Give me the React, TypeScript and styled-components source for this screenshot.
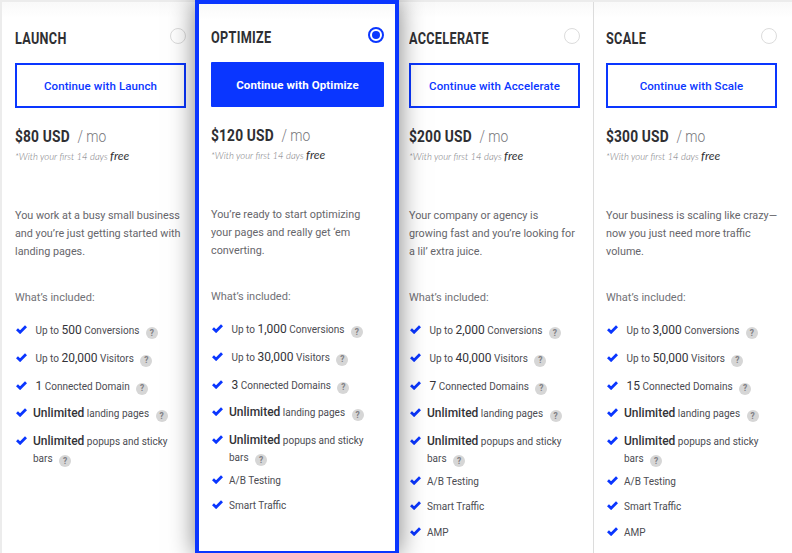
import React from "react";
import styled, { createGlobalStyle } from "styled-components";

const GlobalStyle = createGlobalStyle`
  html, body {
    margin: 0;
    padding: 0;
    height: 553px;
    overflow: hidden;
    background: #fff;
  }
  * { box-sizing: border-box; }
`;

const BLUE = "#0a36ff";

const Page = styled.div`
  display: flex;
  align-items: stretch;
  width: 792px;
  height: 553px;
  padding: 2px 0 0 2px;
  background: #ececec;
  overflow: hidden;
  font-family: "Roboto", "Liberation Sans", sans-serif;
`;

const Card = styled.section<{ $featured?: boolean; $left: number; $right: number; $w: number; $divider?: boolean }>`
  flex: 0 0 ${(p) => p.$w}px;
  min-width: 0;
  height: ${(p) => (p.$featured ? "555px" : "553px")};
  margin-top: ${(p) => (p.$featured ? "-2px" : "0")};
  padding: ${(p) => (p.$featured ? "15px" : "18px")} ${(p) => p.$right}px 0 ${(p) => p.$left}px;
  background: linear-gradient(#f9f9f9, #fff 16px);
  position: relative;
  z-index: ${(p) => (p.$featured ? 2 : 1)};
  border: ${(p) => (p.$featured ? `4px solid ${BLUE}` : "none")};
  border-left: ${(p) => (p.$divider ? "1px solid #dcdcdc" : p.$featured ? `4px solid ${BLUE}` : "none")};
  box-shadow: ${(p) => (p.$featured ? "0 0 24px rgba(0, 0, 0, 0.5)" : "none")};
`;

const Head = styled.header`
  display: flex;
  justify-content: space-between;
  align-items: flex-start;
  height: 43px;
`;

const Title = styled.h2`
  margin: 10px 0 0;
  font-size: 16px;
  line-height: 18px;
  font-weight: 700;
  letter-spacing: 0.4px;
  color: #2f2f33;
  transform: scaleX(0.79);
  transform-origin: left center;
`;

const Radio = styled.span<{ $on?: boolean }>`
  flex: none;
  display: flex;
  align-items: center;
  justify-content: center;
  width: 16px;
  height: 16px;
  margin: 8px 0 0;
  border-radius: 50%;
  border: ${(p) => (p.$on ? `2px solid ${BLUE}` : "1.5px solid #dcdcdc")};
  background: #fff;
  &::after {
    content: "";
    display: ${(p) => (p.$on ? "block" : "none")};
    width: 8px;
    height: 8px;
    border-radius: 50%;
    background: ${BLUE};
  }
`;

const Cta = styled.button<{ $solid?: boolean }>`
  display: block;
  width: 100%;
  height: 45px;
  padding: 0;
  border: 2px solid ${BLUE};
  border-radius: ${(p) => (p.$solid ? "1px" : "0")};
  background: ${(p) => (p.$solid ? BLUE : "#fff")};
  color: ${(p) => (p.$solid ? "#fff" : BLUE)};
  font-family: "Roboto", sans-serif;
  font-size: 11.5px;
  font-weight: ${(p) => (p.$solid ? 700 : 500)};
  letter-spacing: 0.1px;
`;

const Price = styled.div`
  margin-top: 17px;
  display: flex;
  align-items: baseline;
  color: #2f2f33;
  line-height: 22px;
  transform: scaleX(0.81);
  transform-origin: left center;
`;

const Amount = styled.strong`
  font-size: 17px;
  font-weight: 700;
  letter-spacing: 0.2px;
`;

const Period = styled.span`
  margin-left: 9.5px;
  font-size: 17px;
  font-weight: 300;
  color: #77777c;
`;

const Note = styled.p`
  margin: 0;
  height: 18px;
  font-family: "Lato", sans-serif;
  font-size: 9.5px;
  line-height: 18px;
  font-style: italic;
  font-weight: 300;
  color: #77777c;
  white-space: nowrap;
  b {
    font-size: 12px;
    font-weight: 400;
    color: #2f2f33;
  }
`;

const Blurb = styled.p`
  margin: 42px 0 0;
  height: 54px;
  font-size: 10.8px;
  line-height: 18px;
  color: #66666b;
  white-space: nowrap;
`;

const IncludedLabel = styled.div`
  margin-top: 29px;
  font-size: 11px;
  line-height: 16px;
  color: #717176;
`;

const Features = styled.ul`
  list-style: none;
  margin: 16px 0 0;
  padding: 0;
`;

const Feature = styled.li<{ $plain?: boolean }>`
  display: flex;
  align-items: flex-start;
  min-height: ${(p) => (p.$plain ? "25.6px" : "27.8px")};
  padding-bottom: ${(p) => (p.$plain ? "0" : "5.5px")};
  font-size: 10px;
  line-height: 17px;
  color: #4c4c52;
`;

const Check = styled.svg`
  flex: none;
  width: 11px;
  height: 9px;
  margin: 3px 6px 0 1px;
`;

const FeatureText = styled.div<{ $nudge: number }>`
  padding-left: ${(p) => p.$nudge}px;
  b {
    font-size: 12px;
    font-weight: 500;
    color: #333338;
  }
`;

const Count = styled.span`
  font-size: 12px;
  font-weight: 400;
  color: #333338;
`;

const Help = styled.span`
  display: inline-flex;
  align-items: center;
  justify-content: center;
  width: 12px;
  height: 12px;
  margin-left: 4px;
  border-radius: 50%;
  background: #d6d6d6;
  color: #808085;
  font-size: 8.5px;
  font-weight: 700;
  vertical-align: -1.5px;
`;

type Plan = {
  name: string;
  price: string;
  blurb: string[];
  conversions: string;
  visitors: string;
  domains: string;
  extras: string[];
  left: number;
  right: number;
  width: number;
  featured?: boolean;
  divider?: boolean;
};

const plans: Plan[] = [
  {
    name: "Launch",
    price: "$80 USD",
    blurb: ["You work at a busy small business", "and you’re just getting started with", "landing pages."],
    conversions: "500",
    visitors: "20,000",
    domains: "1 Connected Domain",
    extras: [],
    left: 13,
    right: 9,
    width: 193,
  },
  {
    name: "Optimize",
    price: "$120 USD",
    blurb: ["You’re ready to start optimizing", "your pages and really get ‘em", "converting."],
    conversions: "1,000",
    visitors: "30,000",
    domains: "3 Connected Domains",
    extras: ["A/B Testing", "Smart Traffic"],
    left: 12,
    right: 11,
    width: 204,
    featured: true,
  },
  {
    name: "Accelerate",
    price: "$200 USD",
    blurb: ["Your company or agency is", "growing fast and you’re looking for", "a lil’ extra juice."],
    conversions: "2,000",
    visitors: "40,000",
    domains: "7 Connected Domains",
    extras: ["A/B Testing", "Smart Traffic", "AMP"],
    left: 10,
    right: 13,
    width: 194,
  },
  {
    name: "Scale",
    price: "$300 USD",
    blurb: ["Your business is scaling like crazy—", "now you just need more traffic", "volume."],
    conversions: "3,000",
    visitors: "50,000",
    domains: "15 Connected Domains",
    extras: ["A/B Testing", "Smart Traffic", "AMP"],
    left: 12,
    right: 15,
    width: 199,
    divider: true,
  },
];

const Tick = () => (
  <Check viewBox="0 0 11 9">
    <path d="M1 4.2 4.1 7.2 10 1.2" fill="none" stroke={BLUE} strokeWidth="2.8" />
  </Check>
);

const Q = () => <Help>?</Help>;

const PlanCard = ({ plan }: { plan: Plan }) => {
  const [num, ...rest] = plan.domains.split(" ");
  return (
    <Card $featured={plan.featured} $divider={plan.divider} $left={plan.left} $right={plan.right} $w={plan.width}>
      <Head>
        <Title>{plan.name.toUpperCase()}</Title>
        <Radio $on={plan.featured} />
      </Head>
      <Cta $solid={plan.featured}>Continue with {plan.name}</Cta>
      <Price>
        <Amount>{plan.price}</Amount>
        <Period>/ mo</Period>
      </Price>
      <Note>
        *With your first 14 days <b>free</b>
      </Note>
      <Blurb>
        {plan.blurb.map((line) => (
          <React.Fragment key={line}>
            {line}
            <br />
          </React.Fragment>
        ))}
      </Blurb>
      <IncludedLabel>What’s included:</IncludedLabel>
      <Features>
        <Feature>
          <Tick />
          <FeatureText $nudge={2.5}>
            Up to <Count>{plan.conversions}</Count> Conversions <Q />
          </FeatureText>
        </Feature>
        <Feature>
          <Tick />
          <FeatureText $nudge={2.5}>
            Up to <Count>{plan.visitors}</Count> Visitors <Q />
          </FeatureText>
        </Feature>
        <Feature>
          <Tick />
          <FeatureText $nudge={2.5}>
            <Count>{num}</Count> {rest.join(" ")} <Q />
          </FeatureText>
        </Feature>
        <Feature>
          <Tick />
          <FeatureText $nudge={0}>
            <b>Unlimited</b> landing pages <Q />
          </FeatureText>
        </Feature>
        <Feature>
          <Tick />
          <FeatureText $nudge={0}>
            <b>Unlimited</b> popups and sticky bars <Q />
          </FeatureText>
        </Feature>
        {plan.extras.map((extra) => (
          <Feature key={extra} $plain>
            <Tick />
            <FeatureText $nudge={0}>{extra}</FeatureText>
          </Feature>
        ))}
      </Features>
    </Card>
  );
};

export default function App() {
  return (
    <>
      <GlobalStyle />
      <Page>
        {plans.map((plan) => (
          <PlanCard key={plan.name} plan={plan} />
        ))}
      </Page>
    </>
  );
}
